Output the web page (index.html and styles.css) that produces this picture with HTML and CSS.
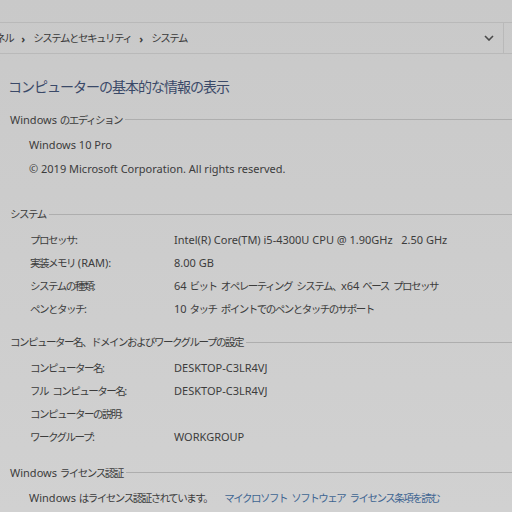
FILE: index.html
```html
<!DOCTYPE html>
<html lang="ja">
<head>
    <meta charset="UTF-8">
    <meta name="viewport" content="width=device-width, initial-scale=1.0">
    <title>システム</title>
    <link rel="stylesheet" href="styles.css">
</head>
<body>
    <!-- Address bar with breadcrumb -->
    <div class="address-bar">
        <div class="crumbs">
            <span class="ja">コントロール パネル</span>
            <span class="sep">›</span>
            <span class="ja">システムとセキュリティ</span>
            <span class="sep">›</span>
            <span class="ja">システム</span>
        </div>
        <div class="dropdown">
            <svg width="10" height="6" viewBox="0 0 10 6"><path d="M1 1 L5 5 L9 1" fill="none" stroke="#4a4a4a" stroke-width="1.6"/></svg>
        </div>
        <div class="refresh"></div>
    </div>

    <div class="content">
        <h1 class="page-title">コンピューターの基本的な情報の表示</h1>

        <div class="section edition">
            <div class="section-head"><span>Windows <span class="ja">のエディション</span></span><div class="rule"></div></div>
            <div class="line">Windows 10 Pro</div>
            <div class="line">© 2019 Microsoft Corporation. All rights reserved.</div>
        </div>

        <div class="section">
            <div class="section-head"><span class="ja">システム</span><div class="rule"></div></div>
            <div class="row"><div class="label"><span class="ja">プロセッサ</span>:</div><div class="value">Intel(R) Core(TM) i5-4300U CPU @ 1.90GHz&nbsp;&nbsp; 2.50 GHz</div></div>
            <div class="row"><div class="label"><span class="ja">実装メモリ</span> (RAM):</div><div class="value">8.00 GB</div></div>
            <div class="row"><div class="label"><span class="ja">システムの種類</span>:</div><div class="value">64 <span class="ja">ビット オペレーティング システム、</span>x64 <span class="ja">ベース プロセッサ</span></div></div>
            <div class="row"><div class="label"><span class="ja">ペンとタッチ</span>:</div><div class="value">10 <span class="ja">タッチ ポイントでのペンとタッチのサポート</span></div></div>
        </div>

        <div class="section">
            <div class="section-head"><span class="ja">コンピューター名、ドメインおよびワークグループの設定</span><div class="rule"></div></div>
            <div class="row"><div class="label"><span class="ja">コンピューター名</span>:</div><div class="value">DESKTOP-C3LR4VJ</div></div>
            <div class="row"><div class="label"><span class="ja">フル コンピューター名</span>:</div><div class="value">DESKTOP-C3LR4VJ</div></div>
            <div class="row"><div class="label"><span class="ja">コンピューターの説明</span>:</div><div class="value"></div></div>
            <div class="row"><div class="label"><span class="ja">ワークグループ</span>:</div><div class="value">WORKGROUP</div></div>
        </div>

        <div class="section license">
            <div class="section-head"><span>Windows <span class="ja">ライセンス認証</span></span><div class="rule"></div></div>
            <div class="line">Windows <span class="ja">はライセンス認証されています。</span><a class="link ja" href="#">マイクロソフト ソフトウェア ライセンス条項を読む</a></div>
        </div>
    </div>
</body>
</html>
```

FILE: styles.css
```css
body {
    margin: 0;
    overflow: hidden;
    background: linear-gradient(#c9c9c9, #d1d1d1);
    min-height: 512px;
    color: #3c3c3c;
    font-family: "Noto Sans", "Noto Sans CJK JP", sans-serif;
    font-size: 11px;
}
/* Japanese runs are set tighter, like Meiryo UI */
.ja {
    font-size: 10.5px;
    letter-spacing: -1.5px;
    word-spacing: 3px;
    line-height: 1;
}
.address-bar {
    margin-top: 22px;
    height: 30px;
    border-top: 1px solid #b9b9b9;
    border-bottom: 1px solid #b9b9b9;
    display: flex;
    align-items: center;
}
.crumbs {
    flex: 1;
    margin-left: -72px;
    display: flex;
    align-items: center;
    gap: 8px;
    white-space: nowrap;
    color: #3a3a3a;
}
.sep {
    font-weight: bold;
}
.dropdown {
    width: 20px;
    display: flex;
    justify-content: center;
    margin-right: 4px;
}
.refresh {
    width: 8px;
    align-self: stretch;
    border-left: 1px solid #b9b9b9;
}
.content {
    padding-left: 8px;
}
.page-title {
    margin: 21px 0 0;
    line-height: 24px;
    font-size: 14px;
    letter-spacing: -1px;
    font-weight: normal;
    color: #3a4968;
}
.section {
    margin-top: 11px;
}
.section.edition {
    margin-top: 9px;
    padding-bottom: 11px;
}
.section.license {
    margin-top: 13px;
}
.section-head {
    display: flex;
    align-items: center;
    gap: 3px;
    height: 23px;
    margin-bottom: 2px;
    padding-left: 2px;
    white-space: nowrap;
}
.rule {
    flex: 1;
    border-top: 1px solid #aeaeae;
}
.line {
    height: 24px;
    line-height: 24px;
    padding-left: 21px;
    white-space: nowrap;
}
.edition .line:first-of-type {
    margin-top: 1px;
}
.row {
    display: grid;
    grid-template-columns: 144px 1fr;
    height: 23px;
    line-height: 23px;
    padding-left: 22px;
    white-space: nowrap;
}
.link {
    margin-left: 12px;
    color: #3e6592;
    text-decoration: none;
}
```
